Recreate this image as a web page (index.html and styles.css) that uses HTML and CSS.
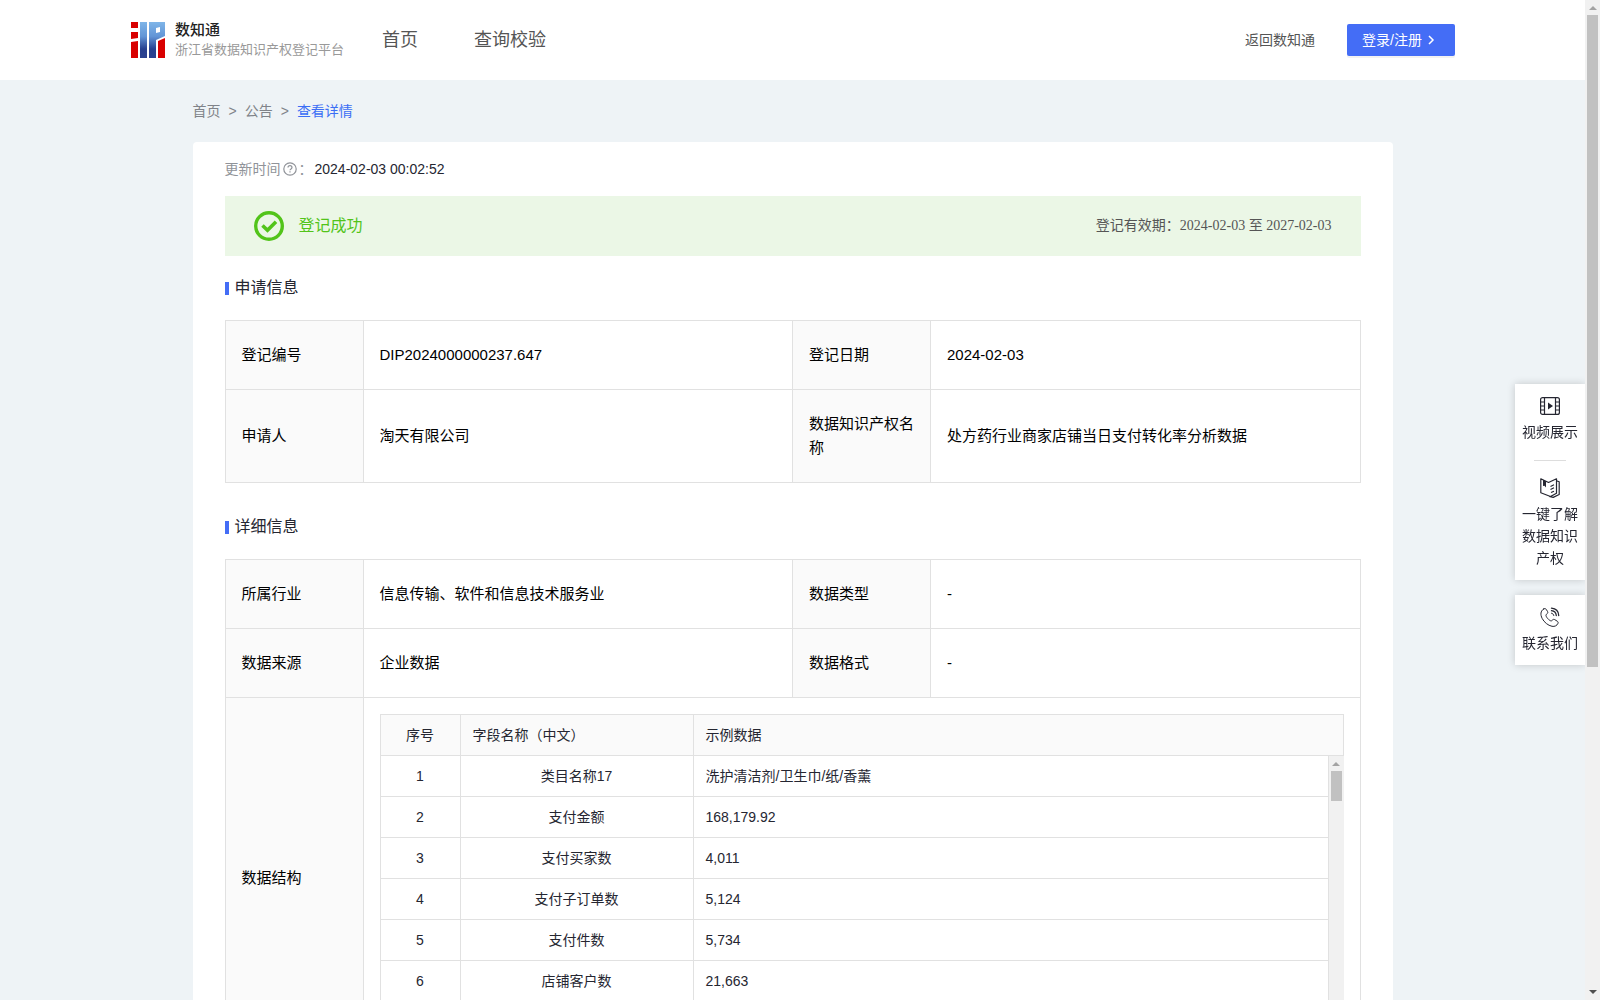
FILE: index.html
```html
<!DOCTYPE html>
<html lang="zh-CN">
<head>
<meta charset="utf-8">
<meta name="viewport" content="width=device-width, initial-scale=1">
<title>数知通 - 查看详情</title>
<link rel="stylesheet" href="styles.css">
</head>
<body>
<div class="app">
  <div class="page">
    <header class="header">
      <a class="brand" href="#">
        <svg class="brand-logo" viewBox="0 0 34 36" aria-hidden="true">
          <defs><linearGradient id="blue" x1="0" y1="0" x2="0" y2="1"><stop offset="0" stop-color="#7fb5e8"/><stop offset=".4" stop-color="#6295d6"/><stop offset=".75" stop-color="#27408f"/><stop offset="1" stop-color="#2b4290"/></linearGradient></defs>
          <path fill="#d90000" d="M0 0h7v6H0zM0 10h7v6l-7 1zM0 20l7-1v17H0zM27 19l7-3v20h-7z"/>
          <path fill="url(#blue)" d="M9 0h7v36H9zM18 0h16v14l-9 4v18h-7zM25 6v5l4-1V5z" fill-rule="evenodd"/>
        </svg>
        <span class="brand-text"><span class="brand-name">数知通</span><span class="brand-sub">浙江省数据知识产权登记平台</span></span>
      </a>
      <nav class="nav"><a href="#">首页</a><a href="#">查询校验</a></nav>
      <div class="account">
        <a href="#">返回数知通</a>
        <button class="login" type="button">登录/注册
          <svg width="10" height="10" viewBox="0 0 10 10" aria-hidden="true"><path d="M3 1l4 4-4 4" fill="none" stroke="currentColor" stroke-width="1.5"/></svg>
        </button>
      </div>
    </header>

    <main class="main">
      <nav class="crumbs"><a href="#">首页</a><span>&gt;</span><a href="#">公告</a><span>&gt;</span><a class="current" href="#">查看详情</a></nav>
      <article class="card">
        <div class="updated">
          <span class="updated-label">更新时间</span>
          <svg class="help" viewBox="0 0 14 14" aria-hidden="true"><circle cx="7" cy="7" r="6.2" fill="none" stroke="currentColor" stroke-width="1.2"/><path d="M5 5.6c0-2.6 4-2.6 4 0 0 1.3-2 1.3-2 2.7M7 9.3v1.2" fill="none" stroke="currentColor" stroke-width="1.2"/></svg>
          <span class="updated-label colon">：</span>
          <time>2024-02-03 00:02:52</time>
        </div>
        <div class="status">
          <svg class="status-icon" viewBox="0 0 30 30" aria-hidden="true"><circle cx="15" cy="15" r="13.3" fill="none" stroke="currentColor" stroke-width="3.4"/><path d="M8.500 14.500l5 4.800 8.500-8.500" fill="none" stroke="currentColor" stroke-width="3.600"/></svg>
          <span class="status-title">登记成功</span>
          <span class="validity">登记有效期：2024-02-03 至 2027-02-03</span>
        </div>

        <h2 class="section-title">申请信息</h2>
        <table class="info">
          <colgroup><col class="col-label"><col class="col-value"><col class="col-label"><col class="col-value"></colgroup>
          <tr><th scope="row">登记编号</th><td>DIP2024000000237.647</td><th scope="row">登记日期</th><td>2024-02-03</td></tr>
          <tr><th scope="row">申请人</th><td>淘天有限公司</td><th scope="row">数据知识产权名称</th><td>处方药行业商家店铺当日支付转化率分析数据</td></tr>
        </table>

        <h2 class="section-title">详细信息</h2>
        <table class="info">
          <colgroup><col class="col-label"><col class="col-value"><col class="col-label"><col class="col-value"></colgroup>
          <tr><th scope="row">所属行业</th><td>信息传输、软件和信息技术服务业</td><th scope="row">数据类型</th><td>-</td></tr>
          <tr><th scope="row">数据来源</th><td>企业数据</td><th scope="row">数据格式</th><td>-</td></tr>
          <tr><th scope="row">数据结构</th><td colspan="3" class="nested">
            <table class="fields fields-head">
              <colgroup><col class="col-no"><col class="col-name"><col></colgroup>
              <tr><th class="center">序号</th><th>字段名称（中文）</th><th>示例数据</th></tr>
            </table>
            <div class="fields-body">
              <table class="fields">
                <colgroup><col class="col-no"><col class="col-name"><col></colgroup>
                <tr><td>1</td><td>类目名称17</td><td>洗护清洁剂/卫生巾/纸/香薰</td></tr>
                <tr><td>2</td><td>支付金额</td><td>168,179.92</td></tr>
                <tr><td>3</td><td>支付买家数</td><td>4,011</td></tr>
                <tr><td>4</td><td>支付子订单数</td><td>5,124</td></tr>
                <tr><td>5</td><td>支付件数</td><td>5,734</td></tr>
                <tr><td>6</td><td>店铺客户数</td><td>21,663</td></tr>
              </table>
              <div class="scrollbar" aria-hidden="true"><span class="arrow arrow-up"></span><span class="thumb thumb-short"></span></div>
            </div>
          </td></tr>
        </table>
      </article>
    </main>
  </div>
  <div class="scrollbar" aria-hidden="true"><span class="arrow arrow-up"></span><span class="thumb thumb-page"></span><span class="arrow arrow-down"></span></div>
  <aside class="tools">
    <div class="tool-group">
      <a class="tool" href="#">
        <svg viewBox="0 0 20 20" aria-hidden="true"><g fill="none" stroke="currentColor" stroke-width="1.200"><rect x=".6" y="1.600" width="18.800" height="16.800" rx="2"/><path d="M4.500 1.600v16.800M15.500 1.600v16.800M.6 6h3.900M.6 10h3.900M.6 14h3.900M15.500 6h3.900M15.500 10h3.900M15.500 14h3.900"/></g><path d="M8 6.500l5 3.500-5 3.500z" fill="currentColor"/></svg>
        <span>视频展示</span>
      </a>
      <a class="tool divided" href="#">
        <svg viewBox="0 0 20 20" aria-hidden="true"><g fill="none" stroke="currentColor" stroke-width="1.200" stroke-linejoin="round"><path d="M.8.8L8.500 4.500 16.500.8v14.400l-6 3.300L.8 14.800zM16.500 2.800l2.700 1v12.700l-6 2.900-4-1M10.500 8.500l3.500-1.700M10.500 11.500l3.500-1.700M11 14.500l3-1.300"/></g><path d="M3 1.800l3 1.400V9.500L4.500 7.800 3 8z" fill="currentColor"/></svg>
        <span>一键了解数据知识产权</span>
      </a>
    </div>
    <div class="tool-group">
      <a class="tool" href="#">
        <svg viewBox="0 0 20 20" aria-hidden="true"><g fill="none" stroke="currentColor" stroke-width="1" stroke-linecap="round" stroke-linejoin="round"><path d="M3.300 2.200C.5 4.200.2 7.500 2.200 11.500c2 3.800 5.800 7 9.800 7.800 2.700.5 5-.6 6-3 .4-1-.1-1.700-.9-2.200l-2.400-1.500c-.9-.5-1.600-.3-2.300.5-.8 1-1.600 1-2.700.2-1.700-1.200-2.800-2.500-3.500-4-.5-1.200-.2-1.800.8-2.500.8-.6 1-1.300.6-2.200L6.300 2.500C5.600 1.300 4.500 1.300 3.300 2.200z"/><path d="M11.500 6.200c1.300.3 2 1 2.300 2.300"/><path d="M11.500 3.700c2.800.3 4.500 2 4.800 4.800M11.500 1.200c4.200.4 7 3.100 7.200 7.300" stroke-width="1.300"/></g></svg>
        <span>联系我们</span>
      </a>
    </div>
  </aside>
</div>
</body>
</html>
```
FILE: styles.css
```css
* { box-sizing: border-box; }

body {
  margin: 0;
  background: #eef3f6;
  color: #252631;
  font: 14px/22px "Liberation Sans", "Noto Sans CJK SC", sans-serif;
}

a { color: inherit; text-decoration: none; }

.app {
  display: flex;
  height: 100vh;
  overflow: hidden;
}

.page { flex: 1; min-width: 0; }

/* Header */
.header {
  display: flex;
  align-items: center;
  height: 80px;
  padding: 0 130px 0 131px;
  background: #fff;
}

.brand { display: flex; align-items: center; gap: 10px; }
.brand-logo { width: 34px; height: 36px; }
.brand-text { display: flex; flex-direction: column; }
.brand-name { color: #222; font-size: 15px; line-height: 20px; font-weight: 500; }
.brand-sub { color: #999; font-size: 13px; line-height: 20px; width: 165px; white-space: nowrap; }

.nav {
  display: flex;
  gap: 56px;
  margin-left: 42px;
  color: #555;
  font-size: 18px;
}

.account {
  display: flex;
  align-items: center;
  gap: 32px;
  margin-left: auto;
  color: #555;
}

.login {
  display: flex;
  align-items: center;
  gap: 4px;
  width: 108px;
  height: 32px;
  padding: 0 15px;
  border: 0;
  border-radius: 2px;
  background: #446df6;
  box-shadow: 0 2px 0 rgba(0, 0, 0, .05);
  color: #fff;
  font: inherit;
  white-space: nowrap;
}

/* Content */
.main { max-width: 1200px; margin: 0 auto; }

.crumbs {
  display: flex;
  gap: 8px;
  padding: 20px 0;
  color: #808389;
}
.crumbs .current { color: #3b6ef5; }

.card {
  padding: 16px 32px;
  border-radius: 4px;
  background: #fff;
}

.updated { display: flex; align-items: center; }
.updated-label { color: #909399; }
.colon { width: 16px; }
.help { width: 14px; height: 14px; margin: 0 2px; color: #909399; }

.status {
  display: flex;
  align-items: center;
  height: 60px;
  margin-top: 16px;
  padding: 0 29px;
  background: #ebf7e6;
}
.status-icon { width: 30px; height: 30px; margin-right: 15px; color: #52c41a; }
.status-title { color: #52c41a; font-size: 16px; }
.validity {
  margin-left: auto;
  color: #555;
  font-family: "Liberation Serif", "Noto Sans CJK SC", serif;
}

.section-title {
  display: flex;
  align-items: center;
  gap: 6px;
  margin: 20px 0;
  font-size: 16px;
  line-height: 24px;
  font-weight: 400;
}
.section-title::before {
  width: 4px;
  height: 13px;
  background: #446df6;
  content: "";
}

.info {
  width: 100%;
  border-collapse: collapse;
  table-layout: fixed;
  color: #000;
  font-size: 15px;
  line-height: 24px;
}
.info + .section-title { margin-top: 32px; }
.col-label { width: 138px; }
.info th, .info td {
  height: 69px;
  padding: 22px 16px;
  border: 1px solid #e1e1e1;
  text-align: left;
  font-weight: 400;
}
.info th { background: #fafafa; }
.info .nested { padding: 16px; }

/* Field list inside the detail table */
.info .fields {
  width: 100%;
  border-collapse: collapse;
  table-layout: fixed;
  color: #252631;
  font-size: 14px;
  line-height: 22px;
}
.col-no { width: 80px; }
.col-name { width: 233px; }
.info .fields th, .info .fields td { height: 41px; padding: 9px 12px; }
.info .fields td:nth-child(-n + 2), .info .fields .center { text-align: center; }
.fields-body { display: flex; height: 286px; overflow: hidden; }
.info .fields-body .fields { flex: 1; width: auto; height: max-content; }
.info .fields-body tr:first-child td { height: 40px; padding-bottom: 8px; border-top: 0; }

/* Scroll bars */
.scrollbar {
  display: flex;
  flex: none;
  flex-direction: column;
  align-items: center;
  width: 15px;
  padding: 6px 2px;
  background: #f1f1f1;
}
.arrow { border: 4px solid transparent; border-top-width: 0; border-bottom: 4px solid #a3a3a3; }
.arrow-down { margin-top: auto; border-bottom-color: #505050; transform: rotate(180deg); }
.thumb { width: 11px; margin-top: 5px; background: #c1c1c1; }
.thumb-short { height: 30px; }
.thumb-page { height: 66%; }

/* Floating tools */
.tools {
  position: fixed;
  top: 384px;
  right: 15px;
  display: flex;
  flex-direction: column;
  gap: 15px;
  width: 70px;
}
.tool-group { padding: 12px 6px 11px; background: #fff; box-shadow: 0 0 8px rgba(0, 0, 0, .18); clip-path: inset(-10px 0 -10px -10px); }
.tool {
  display: flex;
  flex-direction: column;
  align-items: center;
  gap: 5px;
  text-align: center;
}
.tool svg { width: 20px; height: 20px; }
.tool + .tool { margin-top: 17px; }
.divided::before {
  width: 32px;
  height: 1px;
  margin-bottom: 12px;
  background: #ddd;
  content: "";
}
```
